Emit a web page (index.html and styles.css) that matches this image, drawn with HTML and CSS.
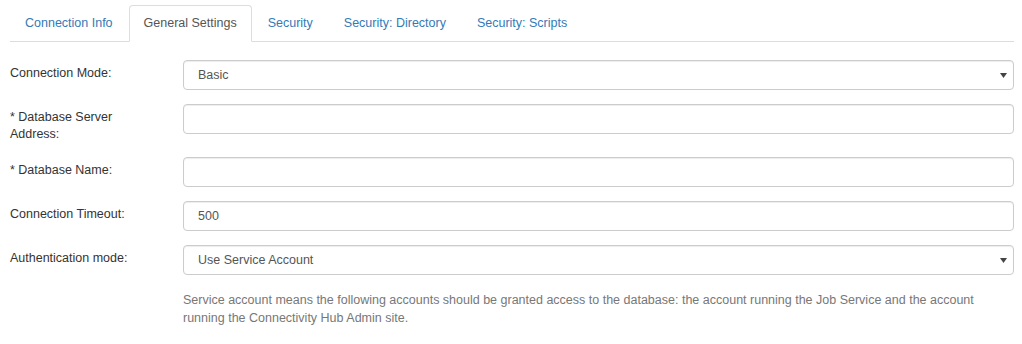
FILE: index.html
```html
<!DOCTYPE html>
<html lang="en">
<head>
    <meta charset="UTF-8">
    <title>General Settings</title>
    <link rel="stylesheet" href="styles.css">
</head>
<body>
    <div class="page">
        <ul class="tabs">
            <li class="tab"><a href="#">Connection Info</a></li>
            <li class="tab active"><a href="#">General Settings</a></li>
            <li class="tab"><a href="#">Security</a></li>
            <li class="tab"><a href="#">Security: Directory</a></li>
            <li class="tab"><a href="#">Security: Scripts</a></li>
        </ul>

        <form class="settings-form">
            <div class="form-row">
                <label class="form-label">Connection Mode:</label>
                <div class="select-wrap">
                    <select class="form-control">
                        <option>Basic</option>
                    </select>
                    <svg class="select-arrow" viewBox="0 0 7 5" width="7" height="5">
                        <path d="M0 0H7L3.5 5Z" fill="#444"/>
                    </svg>
                </div>
            </div>
            <div class="form-row">
                <label class="form-label">* Database Server Address:</label>
                <input class="form-control" type="text">
            </div>
            <div class="form-row">
                <label class="form-label">* Database Name:</label>
                <input class="form-control" type="text">
            </div>
            <div class="form-row">
                <label class="form-label">Connection Timeout:</label>
                <input class="form-control" type="text" value="500">
            </div>
            <div class="form-row">
                <label class="form-label">Authentication mode:</label>
                <div class="select-wrap">
                    <select class="form-control">
                        <option>Use Service Account</option>
                    </select>
                    <svg class="select-arrow" viewBox="0 0 7 5" width="7" height="5">
                        <path d="M0 0H7L3.5 5Z" fill="#444"/>
                    </svg>
                </div>
            </div>
            <div class="form-row">
                <span class="form-label"></span>
                <p class="help-text">Service account means the following accounts should be granted access to the database: the account running the Job Service and the account running the Connectivity Hub Admin site.</p>
            </div>
        </form>
    </div>
</body>
</html>
```

FILE: styles.css
```css
body {
    margin: 0;
    background: #fff;
    font-family: "Liberation Sans", Arial, sans-serif;
    font-size: 12.5px;
    line-height: 17px;
    color: #333;
}
.page {
    padding: 5px 8px 0 10px;
}

/* tabs */
.tabs {
    list-style: none;
    margin: 0;
    padding: 0;
    display: flex;
    border-bottom: 1px solid #ddd;
}
.tab {
    margin-right: 1px;
    margin-bottom: -1px;
}
.tab a {
    display: block;
    padding: 9px 14px;
    border: 1px solid transparent;
    border-radius: 4px 4px 0 0;
    color: #337ab7;
    text-decoration: none;
}
.tab.active a {
    color: #555;
    background: #fff;
    border-color: #ddd #ddd transparent;
}

/* form */
.settings-form {
    padding-top: 18px;
}
.form-row {
    display: grid;
    grid-template-columns: 173px 1fr;
    margin-bottom: 14px;
    min-height: 30px;
}
.form-label {
    padding: 5px 35px 0 0;
}
.form-control {
    box-sizing: border-box;
    width: 100%;
    height: 30px;
    padding: 0 14px;
    border: 1px solid #ccc;
    border-radius: 4px;
    background: #fff;
    font-family: inherit;
    font-size: 12.5px;
    color: #555;
    box-shadow: inset 0 1px 1px rgba(0, 0, 0, 0.075);
}
select.form-control {
    appearance: none;
    -webkit-appearance: none;
}
.select-wrap {
    position: relative;
}
.select-arrow {
    position: absolute;
    right: 7px;
    top: 13px;
    pointer-events: none;
}
.help-text {
    margin: 2px 0 0;
    color: #777;
    line-height: 18px;
    padding-right: 30px;
}
```
